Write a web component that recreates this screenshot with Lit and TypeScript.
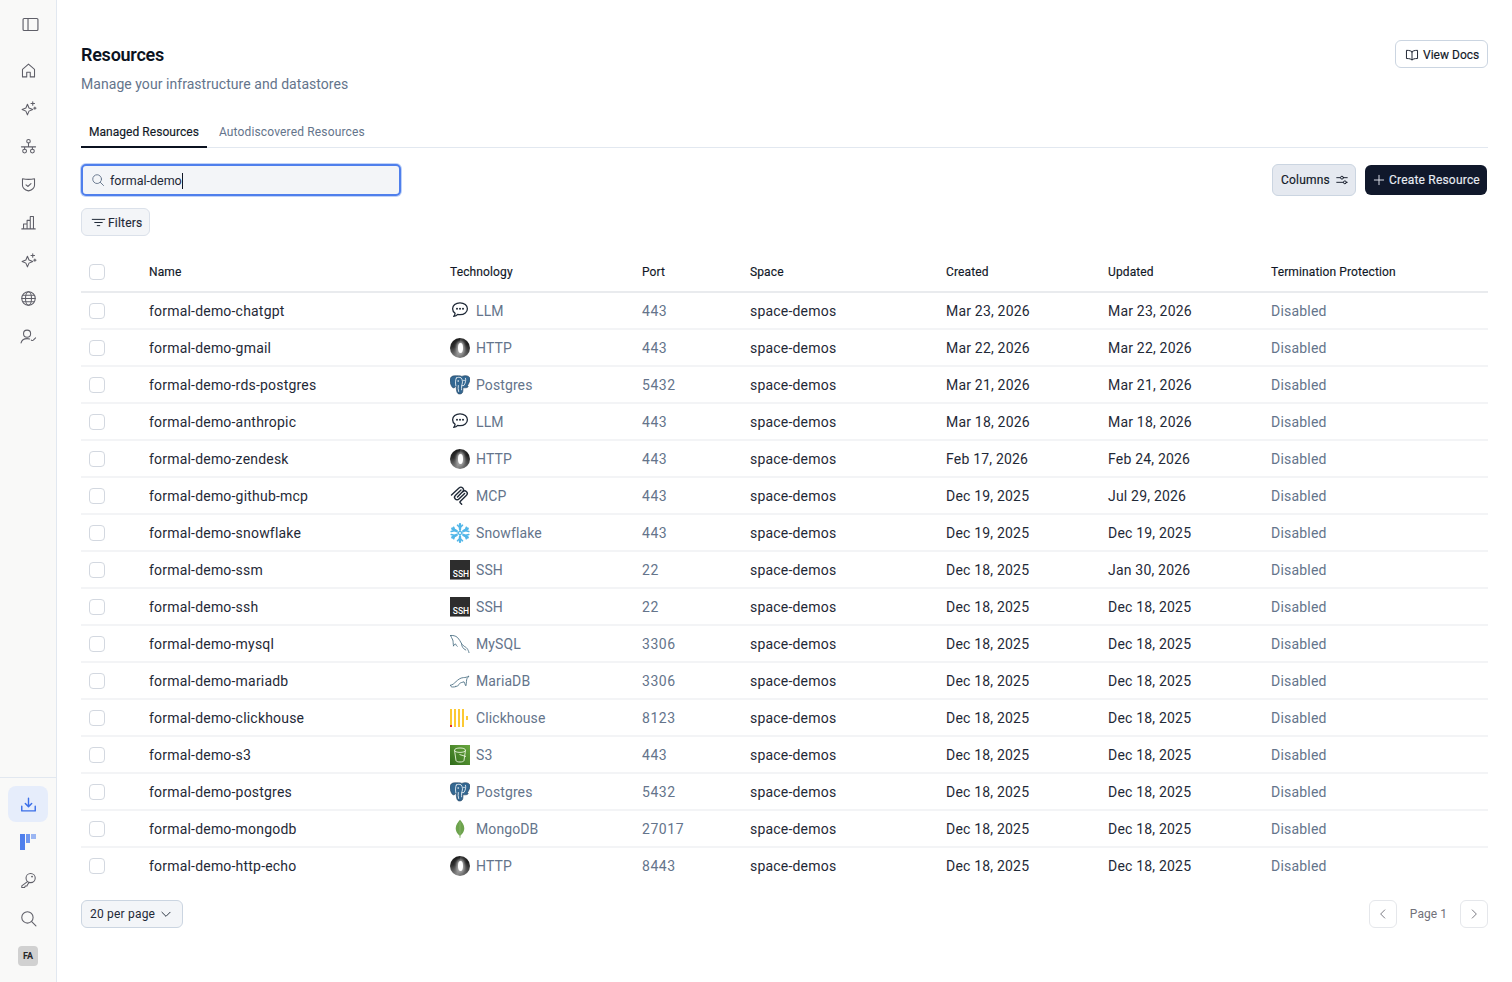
import { LitElement, css, html, svg } from 'lit'
import { customElement } from 'lit/decorators.js'

type Tech = 'llm' | 'http' | 'postgres' | 'mcp' | 'snowflake' | 'ssh' | 'mysql' | 'mariadb' | 'clickhouse' | 's3' | 'mongodb'

interface Row {
  name: string
  tech: Tech
  label: string
  port: string
  created: string
  updated: string
}

const rows: Row[] = [
  { name: 'formal-demo-chatgpt', tech: 'llm', label: 'LLM', port: '443', created: 'Mar 23, 2026', updated: 'Mar 23, 2026' },
  { name: 'formal-demo-gmail', tech: 'http', label: 'HTTP', port: '443', created: 'Mar 22, 2026', updated: 'Mar 22, 2026' },
  { name: 'formal-demo-rds-postgres', tech: 'postgres', label: 'Postgres', port: '5432', created: 'Mar 21, 2026', updated: 'Mar 21, 2026' },
  { name: 'formal-demo-anthropic', tech: 'llm', label: 'LLM', port: '443', created: 'Mar 18, 2026', updated: 'Mar 18, 2026' },
  { name: 'formal-demo-zendesk', tech: 'http', label: 'HTTP', port: '443', created: 'Feb 17, 2026', updated: 'Feb 24, 2026' },
  { name: 'formal-demo-github-mcp', tech: 'mcp', label: 'MCP', port: '443', created: 'Dec 19, 2025', updated: 'Jul 29, 2026' },
  { name: 'formal-demo-snowflake', tech: 'snowflake', label: 'Snowflake', port: '443', created: 'Dec 19, 2025', updated: 'Dec 19, 2025' },
  { name: 'formal-demo-ssm', tech: 'ssh', label: 'SSH', port: '22', created: 'Dec 18, 2025', updated: 'Jan 30, 2026' },
  { name: 'formal-demo-ssh', tech: 'ssh', label: 'SSH', port: '22', created: 'Dec 18, 2025', updated: 'Dec 18, 2025' },
  { name: 'formal-demo-mysql', tech: 'mysql', label: 'MySQL', port: '3306', created: 'Dec 18, 2025', updated: 'Dec 18, 2025' },
  { name: 'formal-demo-mariadb', tech: 'mariadb', label: 'MariaDB', port: '3306', created: 'Dec 18, 2025', updated: 'Dec 18, 2025' },
  { name: 'formal-demo-clickhouse', tech: 'clickhouse', label: 'Clickhouse', port: '8123', created: 'Dec 18, 2025', updated: 'Dec 18, 2025' },
  { name: 'formal-demo-s3', tech: 's3', label: 'S3', port: '443', created: 'Dec 18, 2025', updated: 'Dec 18, 2025' },
  { name: 'formal-demo-postgres', tech: 'postgres', label: 'Postgres', port: '5432', created: 'Dec 18, 2025', updated: 'Dec 18, 2025' },
  { name: 'formal-demo-mongodb', tech: 'mongodb', label: 'MongoDB', port: '27017', created: 'Dec 18, 2025', updated: 'Dec 18, 2025' },
  { name: 'formal-demo-http-echo', tech: 'http', label: 'HTTP', port: '8443', created: 'Dec 18, 2025', updated: 'Dec 18, 2025' },
]

const stroke = (body: unknown, size = 16, width = 1.6) => html`
  <svg width=${size} height=${size} viewBox="0 0 24 24" fill="none" stroke="currentColor" stroke-width=${width} stroke-linecap="round" stroke-linejoin="round">${body}</svg>
`

const sparkle = svg`
  <path d="M10.500 6l2.200 5.300 5.300 2.200-5.300 2.200-2.200 5.300-2.200-5.300L3 13.500l5.300-2.200z"/>
  <path d="M18 2.500v5M15.500 5h5M21 10v3M19.500 11.500h3"/>
`

const navIcons = {
  panel: svg`<rect x="1.500" y="3.500" width="21" height="17" rx="1.500"/><path d="M8.500 3.500v17"/>`,
  home: svg`<path d="M3.500 10.500 12 3l8.500 7.500V21h-6v-6.500h-5V21h-6z"/>`,
  sparkle,
  network: svg`<circle cx="12" cy="4.500" r="2.500"/><path d="M12 7v5.500M2 12.500h20M6.500 12.500v3M17.500 12.500v3"/><circle cx="6.500" cy="18.500" r="2.700"/><circle cx="17.500" cy="18.500" r="2.700"/>`,
  shield: svg`<path d="M3.500 4c5.500 1 11.500 1 17 0v9c0 4-4 6.800-8.500 8-4.500-1.200-8.500-4-8.500-8z"/><path d="m8.500 12.500 2.500 2.300 4.500-4"/>`,
  chart: svg`<path d="M2.500 21h19M5 21v-7h5v7M10 21V9h4.500v12M14.500 21V3.500H19V21"/>`,
  globe: svg`<circle cx="12" cy="12" r="9.500"/><path d="M2.500 12h19M3.800 7.500h16.400M3.800 16.500h16.400"/><ellipse cx="12" cy="12" rx="4.200" ry="9.500"/>`,
  user: svg`<circle cx="10" cy="8" r="5"/><path d="M1.500 21c.8-3.800 4.300-6 8.500-6 1.300 0 2.500.2 3.600.6M16 17c1 .9 1.800 1 2.800.2l3.200-3.200"/>`,
  download: svg`<path d="M12 3v11.500M7.500 10.500l4.500 4.500 4.500-4.500" stroke-width="2"/><path d="M2.500 14.500V21h19v-6.500" stroke-width="2"/>`,
  key: svg`<circle cx="15" cy="8.500" r="6.500"/><path d="M10.500 13.500 2.500 19.500v2.500h4l1-2.200h2.300l1-2.300 2-2.300"/><circle cx="17" cy="6.500" r=".6"/>`,
  search: svg`<circle cx="10.500" cy="10.500" r="8"/><path d="m16.500 16.500 6 6"/>`,
}

function techIcon(tech: Tech) {
  switch (tech) {
    case 'llm':
      return html`<svg width="20" height="20" viewBox="0 0 20 20" fill="none">
        <path d="M10 1.900c4.300 0 7.400 2.600 7.400 5.900s-3.100 5.900-7.400 5.900c-.8 0-1.600-.1-2.300-.3-.9 1.200-2.300 1.900-4 2 .9-.9 1.300-1.900 1.400-3.100-1.600-1.100-2.500-2.700-2.500-4.500 0-3.300 3.100-5.900 7.400-5.900z" stroke="#1f2937" stroke-width="1.300" stroke-linejoin="round"/>
        <circle cx="7" cy="7.800" r="1" fill="#1f2937"/><circle cx="10" cy="7.800" r="1" fill="#1f2937"/><circle cx="13" cy="7.800" r="1" fill="#1f2937"/>
      </svg>`
    case 'http':
      return html`<span class="ring"><span class="ring-hole"></span></span>`
    case 'postgres':
      return html`<svg width="20" height="20" viewBox="0 0 20 20">
        <path d="M5 .8C2 .6 0 2.400 0 5.200c0 2.800 1.200 5.600 2.300 7 .8 1 1.900.8 2.700 0l1-1c.3 1.500.3 3.300.7 5 .5 2.200 1.700 3 3.400 2.800 1.900-.2 2.700-1.500 2.800-3.500l.1-2.800c1.700.3 3.500.2 4.700-.5.8-.5.5-1.300-.4-1.300C18.700 8.700 20.100 6 20 3.800 19.800 1.600 17.500.5 15 .7c-1.200 0-2.300.3-3.100.7C10.800.9 9.500.6 8.200.8 7.200.6 6.100.7 5 .8z" fill="#336791" stroke="#26435f" stroke-width=".6"/>
        <path d="M6.300 3c-1 2.500-1 5.200-.4 8M6.300 3c1.500-1 3.200-.8 4.700-.2 1.800 2.200 1.800 4.700.9 7-.4 1-.3 3-.3 5M15.500 3.300c.8 2.200-.2 5-1.600 7.200l-2 .2M8.300 10.500c-.3 2-.2 4 .3 6" fill="none" stroke="#fff" stroke-width=".8" stroke-linecap="round"/>
        <circle cx="8.200" cy="6" r=".8" fill="#fff"/><circle cx="14" cy="5.500" r=".7" fill="#fff"/>
      </svg>`
    case 'mcp':
      return html`<svg width="20" height="20" viewBox="0 0 20 20" fill="none" stroke="#1f2937" stroke-width="1.400" stroke-linecap="round" stroke-linejoin="round">
        <path d="M1.500 9 9 2c1.100-1 2.700-1 3.700 0s1 2.600 0 3.600L7.500 11"/>
        <path d="M12.800 5.700c1-1 2.700-1 3.700 0s1 2.500 0 3.500L10.200 15.400c-.4.400-.4 1 0 1.400l1.500 1.500"/>
        <path d="M11 4 5.300 9.500c-1 1-1 2.500 0 3.500s2.600 1 3.600 0L14.600 7.500"/>
      </svg>`
    case 'snowflake':
      return html`<svg width="20" height="20" viewBox="0 0 20 20" fill="none" stroke="#52b6e8" stroke-width="2.400" stroke-linecap="round">
        <path d="M10 1.200v5M10 13.800v5M2.300 5.600l4.400 2.500M13.300 11.900l4.400 2.500M2.300 14.400l4.400-2.500M13.300 8.100l4.400-2.500"/>
        <path d="M7.500 2.200 10 4.700l2.500-2.500M7.500 17.800l2.500-2.500 2.500 2.500M1.200 8.500l3.400-.9-.9-3.400M18.800 11.500l-3.400.9.9 3.400M1.200 11.500l3.400.9-.9 3.400M18.800 8.500l-3.400-.9.9-3.400" stroke-width="1.600"/>
        <path d="M10 7.800 12.200 10 10 12.200 7.800 10z" stroke-width="1.300"/>
      </svg>`
    case 'ssh':
      return html`<span class="ssh">SSH</span>`
    case 'mysql':
      return html`<svg width="20" height="20" viewBox="0 0 20 20" fill="none" stroke="#4f7387" stroke-width=".9" stroke-linecap="round" stroke-linejoin="round">
        <path d="M.5 1.500c2.500-.3 5 .3 7 2 1.800 1.600 2.700 4 4 6 .8 1.200 2.500 2.800 4 3.600 1 .6 2.500 1.800 3.500 5.500"/>
        <path d="M.5 1.500C1 3 2 4 2.800 6c.5 1.500.2 3.500.7 5.800M3.500 11.800c.8-1.500 1.600-2 2.200-1.800.4 1.100.7 2 1.500 2.300M11.500 9.500c.2 1.900.8 3.700 2 5l2.300 1.500"/>
      </svg>`
    case 'mariadb':
      return html`<svg width="20" height="20" viewBox="0 0 20 20" fill="none" stroke="#4f7387" stroke-width=".9" stroke-linecap="round" stroke-linejoin="round">
        <path d="M.5 14.300c2.300-.3 3.800-2.200 5.500-3.700 2-1.700 4-3.800 7.500-4 1.800 0 3.300-.3 5.500-1.600-.6 1.200-1.500 1.700-2 2.600-.7 1.500-.4 3.600-1 6.800-.2.800-.3.600-.6-.2-.3-1-1-2.700-1.400-3.400-1.500.6-3 .5-4.500 1.800-1 1-1.300 2.700-2.800 2.700H5.800M.5 14.300c.3 1 .5 1.700 2 1.700 1.500 0 2.300 0 3.300-.4"/>
      </svg>`
    case 'clickhouse':
      return html`<span class="ch">
        <span class="ch-bar red-foot"></span><span class="ch-bar"></span><span class="ch-bar"></span><span class="ch-bar"></span><span class="ch-dot"></span>
      </span>`
    case 's3':
      return html`<svg width="20" height="20" viewBox="0 0 20 20">
        <defs><linearGradient id="s3g" x1="0" y1="1" x2="1" y2="0"><stop offset="0" stop-color="#2f6b1a"/><stop offset="1" stop-color="#6aa83f"/></linearGradient></defs>
        <rect width="20" height="20" fill="url(#s3g)"/>
        <path d="M4.500 5.200C4.500 3.800 7 3 10 3s5.500.8 5.500 2.200L14 15.500c-.2 1-2 1.500-4 1.500s-3.800-.5-4-1.500zM4.500 5.200c0 1.400 2.500 2.200 5.500 2.200s5.500-.8 5.500-2.200M9.500 9.500l6.500 2" fill="none" stroke="#e8f3dc" stroke-width=".9"/>
      </svg>`
    case 'mongodb':
      return html`<svg width="20" height="20" viewBox="0 0 20 20">
        <path d="M10 .8c1.800 2.200 4.300 5 4.300 8.500 0 3.700-2.600 6.500-3.800 7.200L10.300 19h-.6l-.2-2.500C8.300 15.800 5.700 13 5.700 9.300 5.700 5.800 8.200 3 10 .8z" fill="#6da34d"/>
        <path d="M10 3v14" stroke="#a9c88f" stroke-width=".4"/>
      </svg>`
  }
}

@customElement('app-root')
export class AppRoot extends LitElement {
  static styles = css`
    :host {
      display: flex;
      height: 982px;
      overflow: hidden;
      background: #fff;
      color: #111827;
      font-family: Roboto, "Liberation Sans", sans-serif;
    }
    * {
      box-sizing: border-box;
    }
    svg {
      display: block;
      flex: none;
    }
    .sidebar {
      width: 57px;
      flex: none;
      display: flex;
      flex-direction: column;
      background: #f9f9f8;
      border-right: 1px solid #e2e8f0;
      color: #5f5f68;
    }
    .nav-item {
      height: 38px;
      flex: none;
      display: flex;
      align-items: center;
      justify-content: center;
    }
    .nav-toggle {
      height: 48px;
      margin-bottom: 3px;
      padding-left: 4px;
    }
    .spacer {
      flex: 1;
    }
    .side-bottom {
      border-top: 1px solid #e2e8f0;
      padding: 8px 8px 0;
      height: 205px;
    }
    .side-bottom .nav-item.active {
      height: 36px;
      margin-bottom: 1px;
      border-radius: 8px;
      background: #e6edfb;
      color: #3b6fe8;
    }
    .avatar {
      width: 20px;
      height: 20px;
      border-radius: 4px;
      background: #d1d1d1;
      color: #27272a;
      font-size: 9px;
      font-weight: 700;
      display: flex;
      align-items: center;
      justify-content: center;
    }
    .main {
      flex: 1;
      min-width: 0;
      padding: 40px 24px 0;
    }
    .head {
      display: flex;
      justify-content: space-between;
      align-items: flex-start;
      height: 76px;
    }
    h1 {
      margin: 4px 0 0;
      font-size: 18px;
      line-height: 22px;
      font-weight: 600;
      letter-spacing: -0.25px;
      color: #0b1220;
    }
    .sub {
      margin: 8px 0 0;
      font-size: 14px;
      line-height: 20px;
      letter-spacing: 0.05px;
      color: #64748b;
    }
    .btn {
      display: inline-flex;
      align-items: center;
      border-radius: 6px;
      font-size: 12px;
      letter-spacing: 0.2px;
      white-space: nowrap;
      -webkit-text-stroke: 0.15px currentColor;
    }
    .docs {
      height: 28px;
      width: 93px;
      padding: 1px 0 0 9px;
      gap: 4px;
      letter-spacing: 0.02px;
      border: 1px solid #cbd5e1;
      background: #fff;
      color: #111827;
    }
    .tabs {
      display: flex;
      height: 32px;
      border-bottom: 1px solid #e2e8f0;
    }
    .tab {
      height: 32px;
      padding: 1px 8px 0;
      display: flex;
      align-items: center;
      font-size: 12px;
      letter-spacing: 0.15px;
      color: #64748b;
      margin-right: 4px;
      border-bottom: 2px solid transparent;
    }
    .tab.on {
      color: #111827;
      letter-spacing: 0.04px;
      border-bottom-color: #0b1220;
      -webkit-text-stroke: 0.15px currentColor;
    }
    .toolbar {
      display: flex;
      justify-content: space-between;
      align-items: center;
      margin-top: 16px;
      height: 32px;
    }
    .search {
      width: 320px;
      height: 32px;
      display: flex;
      align-items: center;
      gap: 5px;
      padding-left: 8px;
      border: 2px solid #4f7fec;
      box-shadow: 0 0 0 1px #bfd2f8;
      border-radius: 5px;
      background: #f3f5f8;
      font-size: 12.5px;
      color: #64748b;
    }
    .search-text {
      color: #1f2937;
      border-right: 1px solid #111827;
      line-height: 16px;
      margin-top: 1px;
    }
    .actions {
      display: flex;
      gap: 9px;
      margin-right: 1px;
    }
    .columns {
      height: 32px;
      width: 84px;
      padding-left: 8px;
      gap: 5px;
      background: #e5e9f0;
      border: 1px solid #cbd5e1;
      color: #111827;
    }
    .create {
      height: 30px;
      width: 122px;
      padding-left: 7px;
      gap: 3px;
      background: #10182b;
      color: #e8ecf3;
      margin-top: 1px;
    }
    .filters {
      margin-top: 12px;
      height: 28px;
      width: 69px;
      padding: 1px 0 0 9px;
      gap: 2px;
      border: 1px solid #dbe1ea;
      background: #f3f5f8;
      color: #1f2937;
    }
    table {
      width: 100%;
      margin-top: 16px;
      border-collapse: collapse;
      table-layout: fixed;
    }
    th {
      height: 40px;
      padding: 0;
      text-align: left;
      font-size: 12px;
      font-weight: 400;
      letter-spacing: 0.12px;
      -webkit-text-stroke: 0.15px currentColor;
      color: #111827;
      border-bottom: 2px solid #e9ebee;
    }
    td {
      height: 37px;
      padding: 0;
      font-size: 14px;
      letter-spacing: 0.2px;
      color: #1f2937;
      border-bottom: 2px solid #f3f4f6;
    }
    tr:last-child td {
      border-bottom: 0;
    }
    .check {
      display: block;
      width: 16px;
      height: 16px;
      margin-left: 8px;
      border: 1px solid #d3d8e0;
      border-radius: 4px;
      background: #fff;
    }
    .muted {
      color: #64748b;
    }
    .port {
      letter-spacing: 0.55px;
    }
    .tech {
      display: flex;
      align-items: center;
      gap: 6px;
      color: #64748b;
      letter-spacing: 0.1px;
    }
    .ring {
      width: 20px;
      height: 20px;
      flex: none;
      border-radius: 50%;
      background: conic-gradient(#3a3a3a 0deg, #1a1a1a 60deg, #555 130deg, #8a8a8a 200deg, #2a2a2a 280deg, #161616 360deg);
      display: flex;
      align-items: center;
      justify-content: center;
    }
    .ring-hole {
      width: 5px;
      height: 10px;
      border-radius: 50%;
      background: #fff;
      box-shadow: 0 0 3px 2px #a8a8a8;
    }
    .ssh {
      width: 20px;
      height: 20px;
      flex: none;
      background: #2d2d2d;
      border-bottom: 1px solid #8a8a8a;
      color: #fff;
      font-size: 8.5px;
      font-weight: 500;
      letter-spacing: 0;
      line-height: 8px;
      display: flex;
      align-items: flex-end;
      justify-content: center;
      padding: 0 0 1px 2px;
    }
    .ch {
      width: 20px;
      height: 20px;
      flex: none;
      display: flex;
      align-items: center;
      gap: 2px;
    }
    .ch-bar {
      width: 2px;
      height: 18px;
      background: #fcc934;
    }
    .ch-bar.red-foot {
      background: linear-gradient(#fcc934 88%, #e5312b 88%);
    }
    .ch-dot {
      width: 2px;
      height: 4px;
      background: #fcc934;
    }
    .foot {
      display: flex;
      justify-content: space-between;
      align-items: center;
      margin-top: 16px;
    }
    .per-page {
      height: 28px;
      width: 102px;
      padding: 0 9px 0 8px;
      justify-content: space-between;
      border: 1px solid #cbd5e1;
      background: #f3f5f8;
      color: #1f2937;
      -webkit-text-stroke: 0;
    }
    .pager {
      display: flex;
      align-items: center;
      color: #71717a;
      font-size: 12px;
      letter-spacing: 0.05px;
    }
    .page-btn {
      width: 28px;
      height: 28px;
      border: 1px solid #e5e7eb;
      border-radius: 6px;
      display: flex;
      align-items: center;
      justify-content: center;
    }
    .page-label {
      margin: 0 13px;
    }
  `

  render() {
    return html`
      <nav class="sidebar">
        <div class="nav-item nav-toggle">${stroke(navIcons.panel, 17)}</div>
        ${[navIcons.home, navIcons.sparkle, navIcons.network, navIcons.shield, navIcons.chart, navIcons.sparkle, navIcons.globe, navIcons.user].map(
          (icon) => html`<div class="nav-item">${stroke(icon, 17, 1.5)}</div>`
        )}
        <div class="spacer"></div>
        <div class="side-bottom">
          <div class="nav-item active">${stroke(navIcons.download, 17)}</div>
          <div class="nav-item">
            <svg width="16" height="16" viewBox="0 0 16 16" fill="#4f7fec">
              <rect x="0" y="0" width="5" height="16"/><rect x="6" y="0" width="4" height="9" opacity=".8"/><rect x="11" y="0" width="5" height="5" opacity=".55"/>
            </svg>
          </div>
          <div class="nav-item">${stroke(navIcons.key, 17, 1.5)}</div>
          <div class="nav-item">${stroke(navIcons.search, 17, 1.5)}</div>
          <div class="nav-item"><span class="avatar">FA</span></div>
        </div>
      </nav>
      <main class="main">
        <header class="head">
          <div>
            <h1>Resources</h1>
            <p class="sub">Manage your infrastructure and datastores</p>
          </div>
          <span class="btn docs">
            ${stroke(svg`<path d="M12 6.500c-1.500-1.500-4-2.500-9.500-2.500v14c5.500 0 8 1 9.500 2.500 1.500-1.500 4-2.500 9.500-2.500V4C16 4 13.500 5 12 6.500zM12 6.500v14"/>`, 14)}
            View Docs
          </span>
        </header>
        <div class="tabs">
          <div class="tab on">Managed Resources</div>
          <div class="tab">Autodiscovered Resources</div>
        </div>
        <div class="toolbar">
          <div class="search">
            ${stroke(svg`<circle cx="10.500" cy="10.500" r="7.500"/><path d="m16 16 5.500 5.500"/>`, 14)}
            <span class="search-text">formal-demo</span>
          </div>
          <div class="actions">
            <span class="btn columns">
              Columns
              ${stroke(svg`<path d="M3 8h6M15 8h6M3 16h11M20 16h1"/><circle cx="12" cy="8" r="2.500"/><circle cx="17" cy="16" r="2.500"/>`, 14)}
            </span>
            <span class="btn create">${stroke(svg`<path d="M12 4v16M4 12h16"/>`, 14)} Create Resource</span>
          </div>
        </div>
        <span class="btn filters">
          ${stroke(svg`<path d="M2 7h20M6 12h12M10 17h4"/>`, 15)}
          Filters
        </span>
        <table>
          <colgroup>
            <col style="width:68px"/><col style="width:301px"/><col style="width:192px"/><col style="width:108px"/><col style="width:196px"/><col style="width:162px"/><col style="width:163px"/><col/>
          </colgroup>
          <thead>
            <tr>
              <th><span class="check"></span></th>
              <th>Name</th><th>Technology</th><th>Port</th><th>Space</th><th>Created</th><th>Updated</th><th colspan="2">Termination Protection</th>
            </tr>
          </thead>
          <tbody>
            ${rows.map(
              (r) => html`
                <tr>
                  <td><span class="check"></span></td>
                  <td>${r.name}</td>
                  <td><div class="tech">${techIcon(r.tech)}${r.label}</div></td>
                  <td class="muted port">${r.port}</td>
                  <td>space-demos</td>
                  <td>${r.created}</td>
                  <td>${r.updated}</td>
                  <td class="muted" colspan="2">Disabled</td>
                </tr>
              `
            )}
          </tbody>
        </table>
        <footer class="foot">
          <span class="btn per-page">20 per page ${stroke(svg`<path d="m5 9 7 7 7-7"/>`, 14)}</span>
          <div class="pager">
            <span class="page-btn">${stroke(svg`<path d="m15 5-7 7 7 7"/>`, 14)}</span>
            <span class="page-label">Page 1</span>
            <span class="page-btn">${stroke(svg`<path d="m9 5 7 7-7 7"/>`, 14)}</span>
          </div>
        </footer>
      </main>
    `
  }
}
